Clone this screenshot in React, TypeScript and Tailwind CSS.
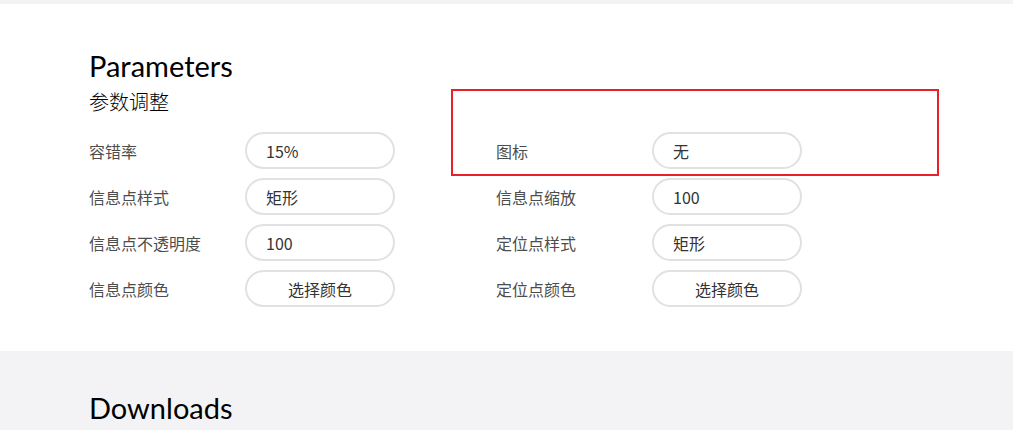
const rows: [string, string, boolean][][] = [
  [
    ["容错率", "15%", false],
    ["图标", "无", false],
  ],
  [
    ["信息点样式", "矩形", false],
    ["信息点缩放", "100", false],
  ],
  [
    ["信息点不透明度", "100", false],
    ["定位点样式", "矩形", false],
  ],
  [
    ["信息点颜色", "选择颜色", true],
    ["定位点颜色", "选择颜色", true],
  ],
];

const heading = { fontFamily: "Lato, 'Noto Sans', sans-serif" };
const cjk = { fontFamily: "'Noto Sans CJK SC', 'Noto Sans', sans-serif" };

function Field({ label, value, center }: { label: string; value: string; center: boolean }) {
  return (
    <div className="flex items-center">
      <div className="w-[156px] text-[16px] text-[#4d4d4d]">{label}</div>
      <div
        className={
          "w-[150px] h-[37px] rounded-full border-2 border-[#e1e1e1] flex items-center text-[16px] text-[#333] " +
          (center ? "justify-center" : "pl-[19px]")
        }
      >
        {value}
      </div>
    </div>
  );
}

export default function App() {
  return (
    <div className="w-[1013px] h-[430px] overflow-hidden bg-[#f3f3f5]" style={cjk}>
      <div className="h-[4px]" />
      <section className="bg-white h-[347px] pl-[89px] pt-[44px] relative">
        <h2 className="text-[29px] leading-[35px] text-black" style={heading}>
          Parameters
        </h2>
        <h3 className="text-[20px] leading-[26px] text-black font-light mt-[6px]">参数调整</h3>
        <div className="mt-[17px] flex flex-col gap-[9px]">
          {rows.map((r, i) => (
            <div key={i} className="grid grid-cols-[407px_407px]">
              {r.map(([l, v, c]) => (
                <Field key={l} label={l} value={v} center={c} />
              ))}
            </div>
          ))}
        </div>
        <div className="absolute left-[451px] top-[85px] w-[488px] h-[87px] border-2 border-[#e8202a] pointer-events-none" />
      </section>
      <section className="pl-[89px] pt-[39px]">
        <h2 className="text-[29px] leading-[35px] text-black" style={heading}>
          Downloads
        </h2>
      </section>
    </div>
  );
}
